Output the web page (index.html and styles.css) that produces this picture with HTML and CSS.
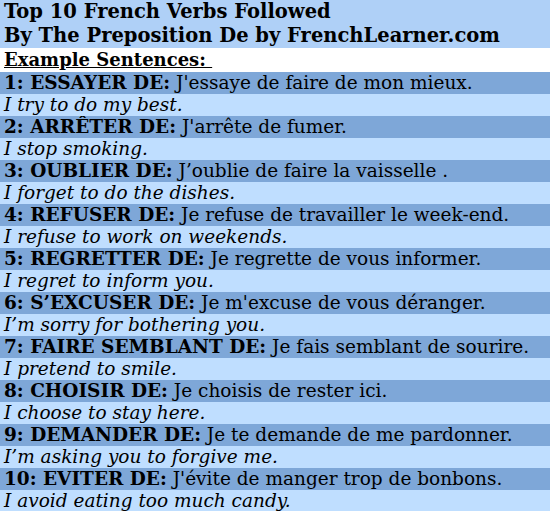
FILE: index.html
```html
<!DOCTYPE html>
<html>
<head>
<meta charset="utf-8">
<link rel="stylesheet" href="styles.css">
</head>
<body>
<div class="sheet">
  <div class="title">Top 10 French Verbs Followed<br>By The Preposition De by FrenchLearner.com</div>
  <div class="sub"><span class="u">Example Sentences:&nbsp;</span></div>
  <div class="row dark"><b>1: ESSAYER DE:</b> J'essaye de faire de mon mieux.</div>
  <div class="row light"><i>I try to do my best.</i></div>
  <div class="row dark"><b>2: ARRÊTER DE:</b> J'arrête de fumer.</div>
  <div class="row light"><i>I stop smoking.</i></div>
  <div class="row dark"><b>3: OUBLIER DE:</b> J’oublie de faire la vaisselle .</div>
  <div class="row light"><i>I forget to do the dishes.</i></div>
  <div class="row dark"><b>4: REFUSER DE:</b> Je refuse de travailler le week-end.</div>
  <div class="row light"><i>I refuse to work on weekends.</i></div>
  <div class="row dark"><b>5: REGRETTER DE:</b> Je regrette de vous informer.</div>
  <div class="row light"><i>I regret to inform you.</i></div>
  <div class="row dark"><b>6: S’EXCUSER DE:</b> Je m'excuse de vous déranger.</div>
  <div class="row light"><i>I’m sorry for bothering you.</i></div>
  <div class="row dark"><b>7: FAIRE SEMBLANT DE:</b> Je fais semblant de sourire.</div>
  <div class="row light"><i>I pretend to smile.</i></div>
  <div class="row dark"><b>8: CHOISIR DE:</b> Je choisis de rester ici.</div>
  <div class="row light"><i>I choose to stay here.</i></div>
  <div class="row dark"><b>9: DEMANDER DE:</b> Je te demande de me pardonner.</div>
  <div class="row light"><i>I’m asking you to forgive me.</i></div>
  <div class="row dark"><b>10: EVITER DE:</b> J'évite de manger trop de bonbons.</div>
  <div class="row light"><i>I avoid eating too much candy.</i></div>
</div>
</body>
</html>
```
FILE: styles.css
```css
html, body {
  margin: 0;
  padding: 0;
  background: #ffffff;
}
.sheet {
  width: 550px;
  font-family: "DejaVu Serif", serif;
  color: #000;
}
.title {
  background: #afd0f7;
  font-weight: bold;
  font-size: 19.5px;
  line-height: 24px;
  padding-left: 4px;
  white-space: nowrap;
}
.sub {
  background: #ffffff;
  font-weight: bold;
  font-size: 18px;
  line-height: 24px;
  height: 24px;
  padding-left: 4px;
}
.u {
  text-decoration: underline;
}
.row {
  height: 22px;
  line-height: 22px;
  font-size: 18.5px;
  padding-left: 4px;
  white-space: nowrap;
  overflow: hidden;
}
.dark {
  background: #7ea7d8;
}
.light {
  background: #bfdeff;
}
```
